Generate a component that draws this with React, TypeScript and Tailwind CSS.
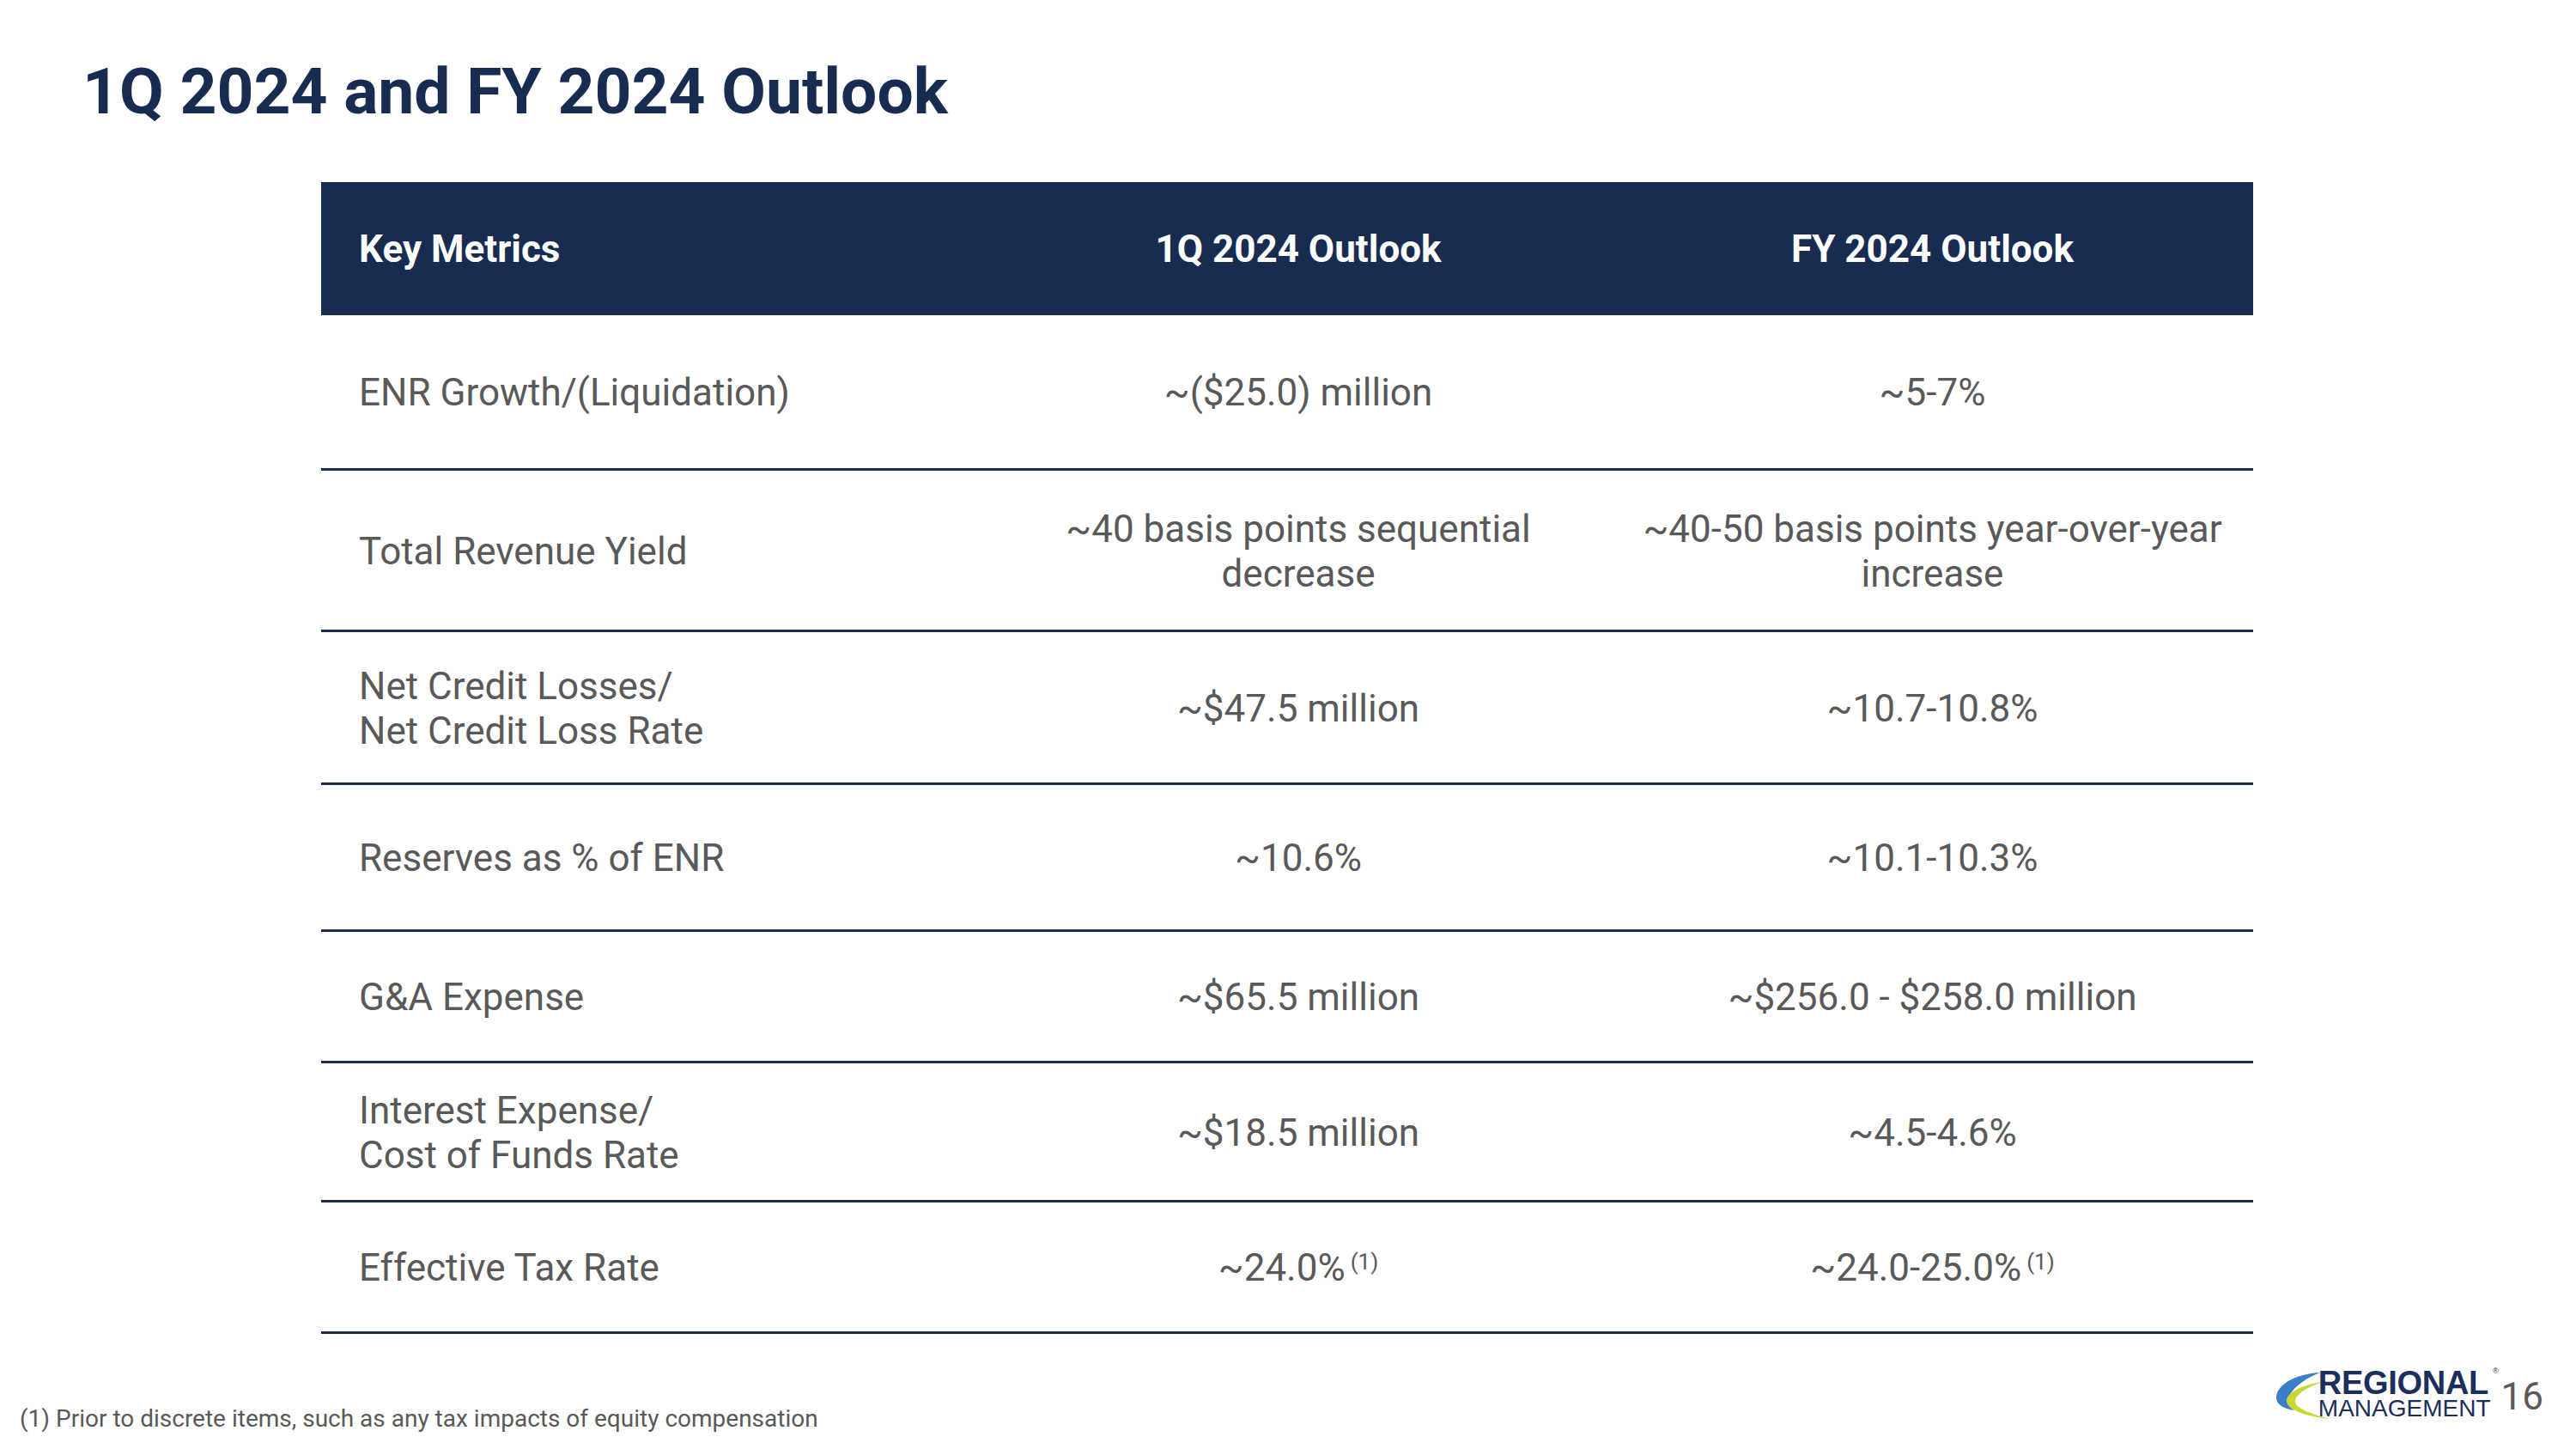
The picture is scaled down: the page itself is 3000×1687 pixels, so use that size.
import React from "react";

const rows: { label: React.ReactNode; q1: React.ReactNode; fy: React.ReactNode; h: string }[] = [
  { label: "ENR Growth/(Liquidation)", q1: "~($25.0) million", fy: "~5-7%", h: "h-[181px]" },
  {
    label: "Total Revenue Yield",
    q1: "~40 basis points sequential decrease",
    fy: "~40-50 basis points year-over-year increase",
    h: "h-[188px]",
  },
  {
    label: (
      <>
        Net Credit Losses/
        <br />
        Net Credit Loss Rate
      </>
    ),
    q1: "~$47.5 million",
    fy: "~10.7-10.8%",
    h: "h-[178px]",
  },
  { label: "Reserves as % of ENR", q1: "~10.6%", fy: "~10.1-10.3%", h: "h-[171px]" },
  { label: "G&A Expense", q1: "~$65.5 million", fy: "~$256.0 - $258.0 million", h: "h-[153px]" },
  {
    label: (
      <>
        Interest Expense/
        <br />
        Cost of Funds Rate
      </>
    ),
    q1: "~$18.5 million",
    fy: "~4.5-4.6%",
    h: "h-[162px]",
  },
  {
    label: "Effective Tax Rate",
    q1: (
      <>
        ~24.0%<sup className="text-[26px] ml-[6px]">(1)</sup>
      </>
    ),
    fy: (
      <>
        ~24.0-25.0%<sup className="text-[26px] ml-[6px]">(1)</sup>
      </>
    ),
    h: "h-[153px]",
  },
];

function Swoosh() {
  return (
    <svg width="66" height="58" viewBox="0 0 66 58" className="-mr-[15px] shrink-0">
      <path
        d="M53,3 C30,4 4,14 2,31 C1,39 9,45 23,47 C15,42 13,36 17,30 C23,19 37,9 53,3 Z"
        fill="#3a7fc8"
      />
      <path
        d="M61,13 C36,16 14,25 14,36 C14,46 36,54 64,57 C46,52 24,45 24,37 C24,28 40,18 61,13 Z"
        fill="#c6d831"
      />
    </svg>
  );
}

export default function App() {
  return (
    <div
      className="w-[3000px] h-[1687px] bg-white flex flex-col overflow-hidden"
      style={{ fontFamily: "Roboto, 'Liberation Sans', sans-serif" }}
    >
      <h1 className="mt-[68px] pl-[96px] text-[75px] leading-[76px] font-bold text-[#172c50]">
        1Q 2024 and FY 2024 Outlook
      </h1>

      <div className="mt-[68px] ml-[374px] w-[2250px]">
        <div className="grid grid-cols-[773px_730px_747px] h-[155px] bg-[#172c50] text-white text-[44px] font-bold items-center">
          <div className="pl-[44px]">Key Metrics</div>
          <div className="text-center">1Q 2024 Outlook</div>
          <div className="text-center">FY 2024 Outlook</div>
        </div>
        {rows.map((r, i) => (
          <div
            key={i}
            className={`grid grid-cols-[773px_730px_747px] ${r.h} border-b-[3px] border-[#1c2b4c] items-center text-[44px] leading-[52px] text-[#595959] pt-[2px]`}
          >
            <div className="pl-[44px]">{r.label}</div>
            <div className="text-center px-[40px]">{r.q1}</div>
            <div className="text-center px-[24px]">{r.fy}</div>
          </div>
        ))}
      </div>

      <div className="flex-1" />

      <div className="flex justify-between items-end pb-[21px]">
        <div className="pl-[23px] text-[28px] leading-[28px] text-[#595959]">
          (1) Prior to discrete items, such as any tax impacts of equity compensation
        </div>
        <div className="flex items-end pr-[38px] mb-[13px]">
          <Swoosh />
          <div className="flex flex-col relative" style={{ fontFamily: "'Liberation Sans', Arial, sans-serif" }}>
            <div className="text-[38px] leading-[33px] font-bold text-[#1b2f5a] tracking-[-0.3px]">REGIONAL</div>
            <div className="text-[28px] leading-[26px] text-[#1b2f5a]">MANAGEMENT</div>
            <span className="absolute -right-[9px] -top-[2px] text-[9px] leading-none text-[#1b2f5a]">®</span>
          </div>
          <div className="ml-[12px] mb-[5px] text-[44px] leading-none text-[#595959]">16</div>
        </div>
      </div>
    </div>
  );
}
